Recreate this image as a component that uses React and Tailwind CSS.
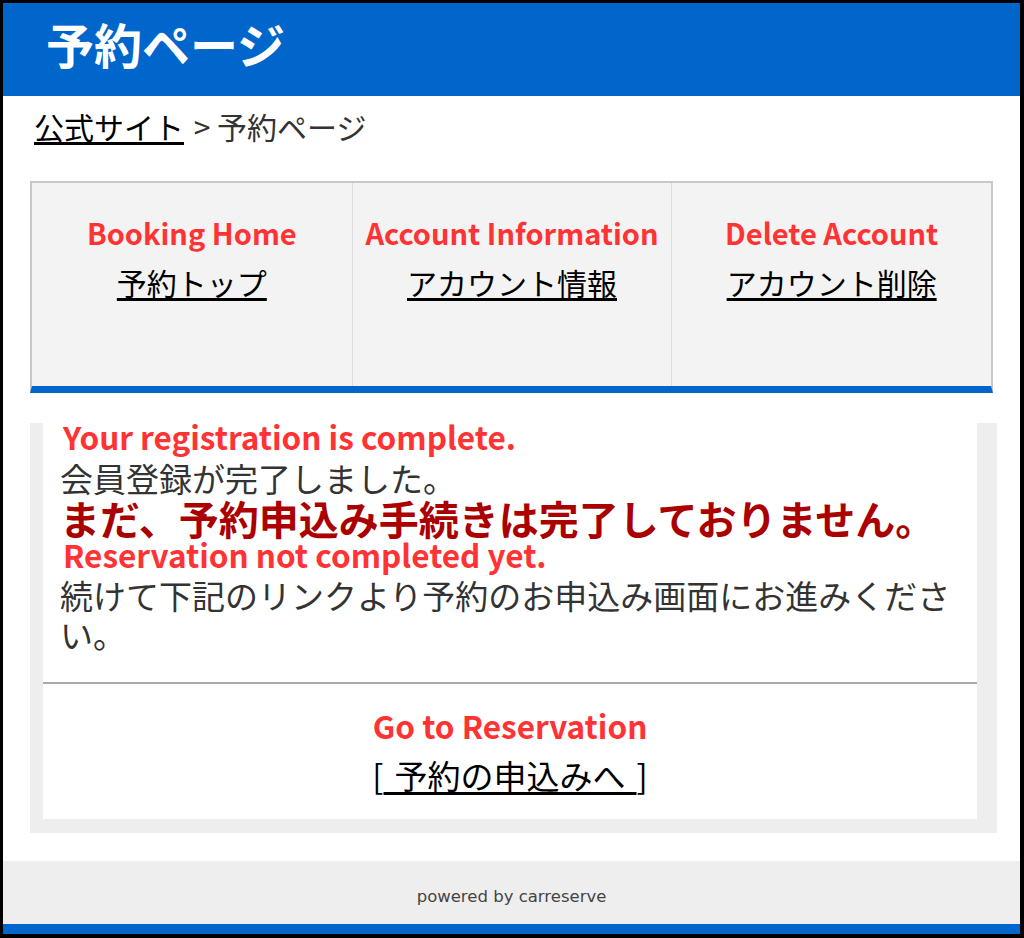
const FONT = { fontFamily: '"Noto Sans CJK JP", "Noto Sans", sans-serif' };

const NAV_ITEMS = [
  { en: 'Booking Home', ja: '予約トップ' },
  { en: 'Account Information', ja: 'アカウント情報' },
  { en: 'Delete Account', ja: 'アカウント削除' },
];

const NavCell = ({ en, ja, first }) => (
  <div className={`h-[203px] pt-[35px] text-center ${first ? '' : 'border-l border-[#dddddd]'}`}>
    <div className="text-[29px] leading-[29px] font-bold text-[#ff3333]">{en}</div>
    <div className="mt-[20px] text-[30px] leading-[30px]">
      <a href="#" className="text-black underline underline-offset-[3px]">{ja}</a>
    </div>
  </div>
);

const App = () => {
  return (
    <div style={FONT} className="h-[938px] overflow-hidden bg-white border-[3px] border-r-4 border-b-4 border-black flex flex-col">
      <header className="h-[93px] bg-[#0066cc] pl-[43px] pt-[16px]">
        <h1 className="text-[48px] leading-[48px] font-bold text-white">予約ページ</h1>
      </header>

      <main className="px-[27px]">
        <div className="pt-[15px] pl-[4px] text-[30px] leading-[30px] text-[#333333]">
          <a href="#" className="text-black underline underline-offset-[3px]">公式サイト</a>
          <span className="ml-[3px]"> &gt; 予約ページ</span>
        </div>

        <nav className="mt-[40px] bg-[#f3f3f3] border-2 border-[#c8c8c8] border-b-[7px] border-b-[#0066cc] grid grid-cols-3">
          {NAV_ITEMS.map((item, i) => (
            <NavCell key={item.en} {...item} first={i === 0} />
          ))}
        </nav>

        <section className="mt-[30px] -mr-[4px] bg-[#eeeeee] pl-[13px] pr-[20px] py-[14px]">
          <div className="bg-white">
            <div className="px-[17px] pb-[28px] border-b-2 border-[#aaaaaa]">
              <p className="-mt-[17px] ml-[3px] text-[31.5px] leading-[32px] font-bold text-[#ff3333]">
                Your registration is complete.
              </p>
              <p className="mt-[6px] text-[33px] leading-[40px] text-[#333333]">会員登録が完了しました。</p>
              <p className="text-[40px] leading-[40px] font-bold text-[#aa0000]">
                まだ、予約申込み手続きは完了しておりません。
              </p>
              <p className="ml-[3px] text-[31.5px] leading-[32px] font-bold text-[#ff3333]">
                Reservation not completed yet.
              </p>
              <p className="mt-[6px] text-[33px] leading-[39px] text-[#333333]">
                続けて下記のリンクより予約のお申込み画面にお進みください。
              </p>
            </div>
            <div className="pt-[25px] pb-[27px] text-center">
              <p className="text-[31.5px] leading-[32px] font-bold text-[#ff3333]">Go to Reservation</p>
              <p className="mt-[18px] text-[33px] leading-[33px] text-black">
                [<a href="#" className="underline underline-offset-[3px]">{'\u2004予約の申込みへ\u2004'}</a>]
              </p>
            </div>
          </div>
        </section>
      </main>

      <footer className="mt-auto">
        <div className="h-[63px] bg-[#eeeeee] pt-[9px] flex items-center justify-center">
          <span style={{ fontFamily: '"DejaVu Sans", sans-serif' }} className="text-[16.5px] text-[#444444]">
            powered by carreserve
          </span>
        </div>
        <div className="h-[10px] bg-[#0066cc]" />
      </footer>
    </div>
  );
};

export default App;
